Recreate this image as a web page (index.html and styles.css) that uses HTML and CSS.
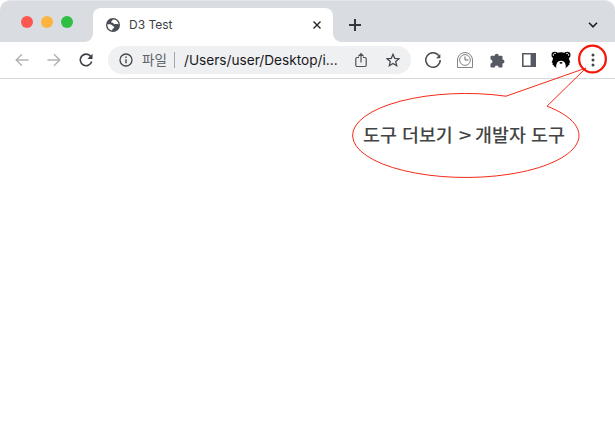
FILE: index.html
```html
<!DOCTYPE html>
<html lang="ko">
<head>
<meta charset="utf-8">
<title>D3 Test</title>
<link rel="stylesheet" href="styles.css">
</head>
<body>
<div class="window">
  <header class="tabstrip">
    <div class="lights"><i class="light red"></i><i class="light amber"></i><i class="light green"></i></div>
    <div class="tab">
      <svg class="favicon" width="14" height="14" viewBox="0 0 14 14"><circle cx="7" cy="7" r="7" fill="#494c54"/><path d="M7.8 1.4C5.8 1.6 6.4 3 5.2 3.6 4.5 4.2 5.4 4.9 6.4 4.8c1.2.1 1.2 1.5 2.2 1.5 1.2 0 2-.5 3.9.1C12.500 4 10.500 1.600 7.800 1.400Z" fill="#fff"/><path d="M1.4 6.3c1.8-.1 4.500-.1 5 1.300.2 1 1.700.4 1.800 1.700C8 10.600 6.400 10 6.200 12.500 3.200 12.100 1.200 9.600 1.400 6.300Z" fill="#fff"/></svg>
      <span class="title">D3 Test</span>
      <svg class="close" width="8" height="8" viewBox="0 0 8 8"><path d="M.5.5l7 7M7.500.5l-7 7" stroke="#24262a" stroke-width="1.400"/></svg>
    </div>
    <svg class="plus" width="12" height="12" viewBox="0 0 12 12"><path d="M6 0v12M0 6h12" stroke="#36383d" stroke-width="2"/></svg>
    <svg class="chevron" width="10" height="6" viewBox="0 0 10 6"><path d="M1 .8l4 4 4-4" fill="none" stroke="#202226" stroke-width="1.600"/></svg>
  </header>
  <nav class="toolbar">
    <div class="slots">
      <span class="slot"><svg width="14" height="14" viewBox="0 0 14 14"><path d="M13.500 7H1.500M7 1.200L1.200 7 7 12.800" fill="none" stroke="#b0b2b5" stroke-width="1.400"/></svg></span>
      <span class="slot"><svg width="14" height="14" viewBox="0 0 14 14"><path d="M.5 7h12M7 1.200L12.800 7 7 12.800" fill="none" stroke="#b0b2b5" stroke-width="1.400"/></svg></span>
      <span class="slot"><svg width="14" height="14" viewBox="0 0 14 14"><path d="M11.800 3.500A5.800 5.800 0 1 0 12.700 8.500" fill="none" stroke="#3c3f45" stroke-width="1.600"/><path d="M13.500.8V6H8.300Z" fill="#3c3f45"/></svg></span>
    </div>
    <div class="omnibox">
      <svg class="info" width="14" height="14" viewBox="0 0 14 14"><circle cx="7" cy="7" r="6" fill="none" stroke="#45484d" stroke-width="1.300"/><path d="M7 6.200v4M7 3.500V5" stroke="#45484d" stroke-width="1.400"/></svg>
      <span class="scheme">파일</span>
      <span class="url">/Users/user/Desktop/i...</span>
      <svg class="share" width="12" height="16" viewBox="0 0 12 16"><path d="M4 5.500H2A1.200 1.200 0 0 0 .8 6.700v6.600A1.200 1.200 0 0 0 2 14.500h8a1.200 1.200 0 0 0 1.200-1.200V6.700A1.200 1.200 0 0 0 10 5.500H8M6 10.500V2M3.300 4.400L6 1.700l2.700 2.700" fill="none" stroke="#505359" stroke-width="1.200"/></svg>
      <svg class="star" width="14" height="14" viewBox="0 0 14 14"><path d="M7 1.300l1.700 4 4.300.4-3.300 2.800 1 4.200L7 10.500l-3.700 2.200 1-4.200L1 5.700l4.300-.4Z" fill="none" stroke="#43464c" stroke-width="1.250"/></svg>
    </div>
    <div class="slots">
      <span class="slot"><svg width="16" height="16" viewBox="0 0 16 16"><path d="M13.700 3.600A7.200 7.200 0 1 0 15.200 8" fill="none" stroke="#484b50" stroke-width="1.500"/><path d="M15.300 2v4.200h-4.200Z" fill="#484b50"/></svg></span>
      <span class="slot"><svg width="16" height="16" viewBox="0 0 16 16"><path d="M.5 15.500V8a7.500 7.500 0 0 1 15 0v7.500Z" fill="none" stroke="#777" stroke-width=".9"/><circle cx="8" cy="8" r="5.400" fill="none" stroke="#777" stroke-width=".9"/><path d="M8 4.500V8h3.500" fill="none" stroke="#666"/></svg></span>
      <span class="slot"><svg width="15" height="15" viewBox="0 0 15 15"><path d="M4.700 2.700a2 2 0 0 1 4 0h2.800a1 1 0 0 1 1 1v2.700a2 2 0 0 1 0 4V13.500a1 1 0 0 1-1 1H8.700a2 2 0 0 0-4 0H1.500a1 1 0 0 1-1-1v-3a2 2 0 0 0 0-4V3.700a1 1 0 0 1 1-1Z" fill="#555962"/></svg></span>
      <span class="slot"><svg width="14" height="14" viewBox="0 0 14 14"><path d="M0 0h14v14H0ZM1.600 1.600v10.800h7V1.600Z" fill="#555962" fill-rule="evenodd"/></svg></span>
      <span class="slot"><svg class="bear" width="20" height="18" viewBox="0 0 20 18"><circle cx="3.800" cy="4" r="3.300"/><circle cx="16.200" cy="4" r="3.300"/><path d="M10 1.200C5 1.200 2.500 4.500 1.800 8.500L.7 11.500l1 .2-.2 2 1 .2.500 1.700 1.200.1 1.100 1.700C4.700 12.700 6.500 9.700 10 9.700s5.300 3 4.700 7.700l1.100-1.700 1.200-.1.500-1.700 1-.2-.2-2 1-.2-1.100-3C17.500 4.500 15 1.200 10 1.200Z"/><path d="M2.400 5A1.900 1.900 0 0 1 5 2.500M17.600 5A1.900 1.900 0 0 0 15 2.500" fill="none" stroke="#fff" stroke-width=".8"/><ellipse cx="10" cy="11.800" rx="1.500" ry=".9"/></svg></span>
      <span class="slot"><svg width="4" height="14" viewBox="0 0 4 14"><g fill="#42454c"><circle cx="2" cy="2" r="1.500"/><circle cx="2" cy="7" r="1.500"/><circle cx="2" cy="12" r="1.500"/></g></svg></span>
    </div>
  </nav>
  <main class="page"></main>
  <svg class="annotation" width="615" height="423" viewBox="0 0 615 423" fill="none" stroke="#f42a18">
    <circle cx="592.500" cy="59" r="13.400" stroke="#f51408" stroke-width="2.200"/>
    <path d="M506 96.200A113.200 42 0 1 0 547 106.200L586 68Z"/>
  </svg>
  <div class="callout">도구 더보기 <span class="arrow">&gt;</span> 개발자 도구</div>
</div>
</body>
</html>
```
FILE: styles.css
```css
body { margin: 0; background: #fff; font-family: Inter, "Noto Sans CJK KR", sans-serif; }
svg { display: block; flex: none; }
.window { position: relative; width: 615px; height: 423px; overflow: hidden; display: flex; flex-direction: column; }
.tabstrip { box-sizing: border-box; height: 42px; flex: none; display: flex; align-items: flex-start; padding: 7px 17px 0 21px; background: #d9dce1; border-top: 1px solid #e4e6e9; border-radius: 10px 10px 0 0; }
.lights { display: flex; gap: 8px; width: 72px; padding-top: 7.5px; }
.light { width: 12px; height: 12px; border-radius: 50%; }
.red { background: #fc5750; }
.amber { background: #fdb43f; }
.green { background: #2ebf44; }
.tab { position: relative; box-sizing: border-box; width: 240px; height: 34px; display: flex; align-items: center; padding: 0 12px 0 13px; background: #fff; border-radius: 8px 8px 0 0; }
.tab::before, .tab::after { content: ""; position: absolute; bottom: 0; width: 8px; height: 8px; }
.tab::before { right: 100%; background: radial-gradient(circle at 0 0, transparent 7.5px, #fff 8px); }
.tab::after { left: 100%; background: radial-gradient(circle at 100% 0, transparent 7.5px, #fff 8px); }
.title { margin-left: 9px; flex: 1; font-size: 12px; line-height: 16px; color: #3c3f44; }
.plus { margin: 11px 0 0 16px; }
.chevron { margin: 14px 0 0 auto; }
.toolbar { box-sizing: border-box; height: 37px; flex: none; display: flex; align-items: center; padding: 0 6px; border-bottom: 1px solid #d6d8db; }
.slots { display: flex; }
.slot { width: 32px; height: 28px; display: flex; align-items: center; justify-content: center; }
.omnibox { box-sizing: border-box; width: 303px; height: 28px; margin: 0 6px; padding: 0 11px; display: flex; align-items: center; border-radius: 14px; background: #eff0f2; white-space: nowrap; }
.scheme { margin-left: 9px; width: 33px; box-sizing: border-box; border-right: 1px solid #a5a7aa; font: 13.500px/14px "Noto Sans CJK KR", sans-serif; color: #5f6268; padding-bottom: 2px; }
.url { margin-left: 9px; flex: 1; font-size: 13.650px; line-height: 18px; color: #18191b; }
.star { margin-left: 19px; }
.page { flex: 1; }
.annotation { position: absolute; inset: 0; }
.callout { position: absolute; left: 363px; top: 122px; font: 500 18.400px/24px "Noto Sans CJK KR", sans-serif; color: #444; white-space: nowrap; }
.arrow { display: inline-block; width: 12px; text-align: center; transform: translateX(1px) scaleX(1.2); }
```
